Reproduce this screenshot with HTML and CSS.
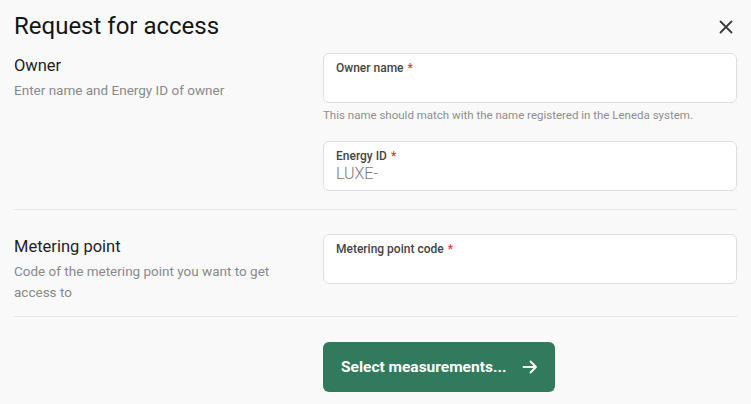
FILE: index.html
```html
<!DOCTYPE html>
<html lang="en">
<head>
<meta charset="utf-8">
<title>Request for access</title>
<link rel="stylesheet" href="styles.css">
</head>
<body>
<div class="dialog">
  <header class="dialog-header">
    <h1 class="title">Request for access</h1>
    <button class="close" aria-label="Close">
      <svg width="14" height="14" viewBox="0 0 14 14"><path d="M1.5 1.5 L12.5 12.5 M12.5 1.5 L1.5 12.5" stroke="#3a3a3a" stroke-width="1.8" stroke-linecap="round" fill="none"/></svg>
    </button>
  </header>

  <section class="section first">
    <div class="info">
      <h2 class="sec-title">Owner</h2>
      <p class="sec-desc">Enter name and Energy ID of owner</p>
    </div>
    <div class="fields">
      <div class="field">
        <label class="label">Owner name <span class="req">*</span></label>
        <div class="value"></div>
      </div>
      <p class="helper">This name should match with the name registered in the Leneda system.</p>
      <div class="field">
        <label class="label">Energy ID <span class="req">*</span></label>
        <div class="value placeholder">LUXE-</div>
      </div>
    </div>
  </section>

  <section class="section second">
    <div class="info">
      <h2 class="sec-title">Metering point</h2>
      <p class="sec-desc">Code of the metering point you want to get access to</p>
    </div>
    <div class="fields">
      <div class="field">
        <label class="label">Metering point code <span class="req">*</span></label>
        <div class="value"></div>
      </div>
    </div>
  </section>

  <div class="actions">
    <div></div>
    <div>
      <button class="primary">Select measurements...
        <svg width="16" height="14" viewBox="0 0 16 14"><path d="M1.5 7 H14 M8.5 1.5 L14 7 L8.5 12.5" stroke="#fff" stroke-width="1.8" stroke-linecap="round" stroke-linejoin="round" fill="none"/></svg>
      </button>
    </div>
  </div>
</div>
</body>
</html>
```

FILE: styles.css
```css
* { box-sizing: border-box; }
html, body {
  margin: 0;
  background: #f9f9f9;
  font-family: Roboto, "Liberation Sans", Arial, sans-serif;
  color: #1f1f1f;
}
.dialog {
  padding: 8px 14px 0 14px;
  width: 751px;
}
.dialog-header {
  display: flex;
  align-items: center;
  justify-content: space-between;
  height: 36px;
}
.title {
  margin: 0;
  font-size: 24px;
  font-weight: 400;
  line-height: 32px;
  color: #151515;
}
.close {
  border: none;
  background: none;
  padding: 0;
  margin-right: 4px;
  margin-top: 2px;
  width: 14px;
  height: 14px;
  display: flex;
}
.section {
  display: grid;
  grid-template-columns: 309px 414px;
  padding: 24px 0 13px 0;
  border-bottom: 1px solid #e6e6e6;
}
.section.first { padding-top: 9px; padding-bottom: 18px; }
.info { padding-right: 24px; padding-top: 2px; }
.sec-title {
  margin: 0;
  font-size: 16.5px;
  font-weight: 400;
  line-height: 22px;
  color: #1f1f1f;
}
.sec-desc {
  margin: 3px 0 0 0;
  font-size: 13.5px;
  line-height: 21px;
  color: #8a8a8a;
}
.fields { display: flex; flex-direction: column; }
.field {
  height: 50px;
  background: #fff;
  border: 1px solid #dedede;
  border-radius: 6px;
  padding: 6px 12px 0 12px;
  display: flex;
  flex-direction: column;
}
.label {
  font-size: 12px;
  font-weight: 500;
  line-height: 16px;
  color: #454545;
}
.req { color: #e0393e; margin-left: 1px; }
.value {
  font-size: 16px;
  line-height: 20px;
  color: #222;
}
.value.placeholder { color: #7a7a7a; font-weight: 300; }
.helper {
  margin: 5px 0 19px 0;
  font-size: 11.5px;
  line-height: 14px;
  color: #8f8f8f;
}
.actions {
  display: grid;
  grid-template-columns: 309px 414px;
  padding-top: 25px;
}
.primary {
  display: flex;
  align-items: center;
  gap: 16px;
  height: 50px;
  width: 232px;
  padding: 0 0 0 18px;
  border: none;
  border-radius: 6px;
  background: #317a5e;
  color: #fff;
  font-family: Roboto, "Liberation Sans", Arial, sans-serif;
  font-size: 15.5px;
  font-weight: 700;
}
```
